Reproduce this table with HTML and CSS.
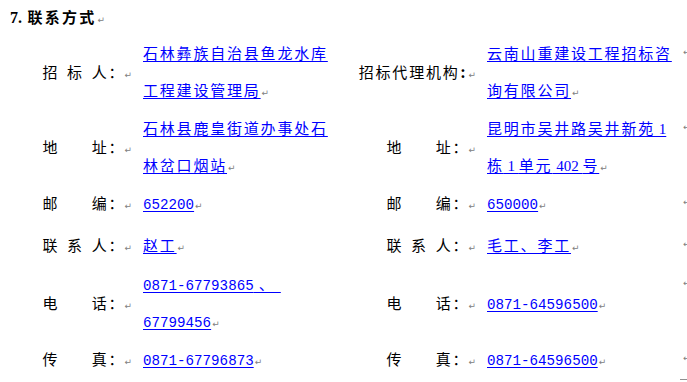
FILE: index.html
```html
<!DOCTYPE html>
<html lang="zh-CN">
<head>
<meta charset="utf-8">
<title>联系方式</title>
<link rel="stylesheet" href="styles.css">
</head>
<body>
<h1 class="title"><span class="num">7.</span> 联系方式<span class="rm">↵</span></h1>
<div class="table">
  <div class="row">
    <div class="lbl"><span class="nm"><i>招</i><i>标</i><i>人</i></span><span class="colon">：</span><span class="rm">↵</span></div>
    <div class="val"><a href="#">石林彝族自治县鱼龙水库<br>工程建设管理局</a><span class="rm">↵</span></div>
    <div class="lbl"><span>招标代理机构</span><span class="colon narrow">:</span><span class="rm">↵</span></div>
    <div class="val"><a href="#">云南山重建设工程招标咨<br>询有限公司</a><span class="rm">↵</span></div>
    <div class="end"><span class="rm">↵</span></div>
  </div>
  <div class="row">
    <div class="lbl"><span class="nm"><i>地</i><i>址</i></span><span class="colon">：</span><span class="rm">↵</span></div>
    <div class="val"><a href="#">石林县鹿皇街道办事处石<br>林岔口烟站</a><span class="rm">↵</span></div>
    <div class="lbl"><span class="nm"><i>地</i><i>址</i></span><span class="colon">：</span><span class="rm">↵</span></div>
    <div class="val"><a href="#">昆明市吴井路吴井新苑<span class="lat"> 1</span><br>栋<span class="lat"> 1 </span>单元<span class="lat"> 402 </span>号</a><span class="rm">↵</span></div>
    <div class="end"><span class="rm">↵</span></div>
  </div>
  <div class="row row--loose">
    <div class="lbl"><span class="nm"><i>邮</i><i>编</i></span><span class="colon">：</span><span class="rm">↵</span></div>
    <div class="val"><a href="#" class="mono">652200</a><span class="rm">↵</span></div>
    <div class="lbl"><span class="nm"><i>邮</i><i>编</i></span><span class="colon">：</span><span class="rm">↵</span></div>
    <div class="val"><a href="#" class="mono">650000</a><span class="rm">↵</span></div>
    <div class="end"><span class="rm">↵</span></div>
  </div>
  <div class="row row--mid">
    <div class="lbl"><span class="nm"><i>联</i><i>系</i><i>人</i></span><span class="colon">：</span><span class="rm">↵</span></div>
    <div class="val"><a href="#">赵工</a><span class="rm">↵</span></div>
    <div class="lbl"><span class="nm"><i>联</i><i>系</i><i>人</i></span><span class="colon">：</span><span class="rm">↵</span></div>
    <div class="val"><a href="#">毛工、李工</a><span class="rm">↵</span></div>
    <div class="end"><span class="rm">↵</span></div>
  </div>
  <div class="row">
    <div class="lbl"><span class="nm"><i>电</i><i>话</i></span><span class="colon">：</span><span class="rm">↵</span></div>
    <div class="val"><a href="#"><span class="mono">0871-67793865</span> 、&nbsp;<br><span class="mono">67799456</span></a><span class="rm">↵</span></div>
    <div class="lbl"><span class="nm"><i>电</i><i>话</i></span><span class="colon">：</span><span class="rm">↵</span></div>
    <div class="val"><a href="#" class="mono">0871-64596500</a><span class="rm">↵</span></div>
    <div class="end"><span class="rm">↵</span></div>
  </div>
  <div class="row">
    <div class="lbl"><span class="nm"><i>传</i><i>真</i></span><span class="colon">：</span><span class="rm">↵</span></div>
    <div class="val"><a href="#" class="mono">0871-67796873</a><span class="rm">↵</span></div>
    <div class="lbl"><span class="nm"><i>传</i><i>真</i></span><span class="colon">：</span><span class="rm">↵</span></div>
    <div class="val"><a href="#" class="mono">0871-64596500</a><span class="rm">↵</span></div>
    <div class="end"><span class="rm">↵</span></div>
  </div>
  <div class="tail"><span class="tail-mark"></span></div>
</div>
</body>
</html>
```

FILE: styles.css
```css
html, body {
  margin: 0;
  padding: 0;
  background: #ffffff;
}

body {
  font-family: "Noto Sans CJK SC", "Noto Sans", sans-serif;
  font-size: 15px;
  letter-spacing: 1.8px;
  color: #000000;
  overflow: hidden;
}

.title {
  margin: 7px 0 6px;
  padding-left: 10px;
  font-size: 15px;
  line-height: 20px;
  font-weight: 700;
  letter-spacing: 2.2px;
}

.title .num {
  font-family: "Liberation Serif", serif;
  font-size: 16px;
  letter-spacing: 0;
}

.rm {
  font-family: "DejaVu Sans", sans-serif;
  font-size: 9px;
  line-height: 1;
  font-weight: 400;
  letter-spacing: 0;
  color: #808080;
  text-decoration: none;
  margin-left: 1px;
}

.table {
  display: flex;
  flex-direction: column;
}

.row {
  display: grid;
  grid-template-columns: 133px 211px 133px 206px 1fr;
  align-items: center;
  padding-bottom: 1px;
  line-height: 37px;
}

.row--loose {
  padding-bottom: 5px;
}

.row--mid {
  padding-bottom: 2px;
}

.lbl {
  text-align: right;
  white-space: nowrap;
  padding-right: 1px;
}

.nm {
  display: inline-flex;
  justify-content: space-between;
  width: 66px;
  line-height: 1;
}

.nm i {
  font-style: normal;
}

.colon {
  display: inline-block;
  width: 15px;
  line-height: 1;
  letter-spacing: 0;
  text-align: left;
}

.colon.narrow {
  width: auto;
  padding: 0 2px 0 1px;
  font-weight: 700;
}

.val {
  padding-left: 10px;
  white-space: nowrap;
}

.val a {
  color: #0000ff;
  text-decoration: underline;
  text-decoration-thickness: 1px;
  text-underline-offset: 2px;
}

.mono {
  font-family: "Liberation Mono", monospace;
  font-size: 14.2px;
  line-height: 1;
  letter-spacing: 0;
}

.lat {
  font-family: "Liberation Serif", serif;
  line-height: 1;
  letter-spacing: 0;
}

.end {
  align-self: start;
  white-space: nowrap;
}

.end .rm {
  vertical-align: 4px;
  margin-left: 0;
}

.tail {
  display: flex;
  justify-content: flex-end;
  padding-top: 1px;
}

.tail-mark {
  width: 7px;
  height: 1px;
  background: #909090;
}
```
